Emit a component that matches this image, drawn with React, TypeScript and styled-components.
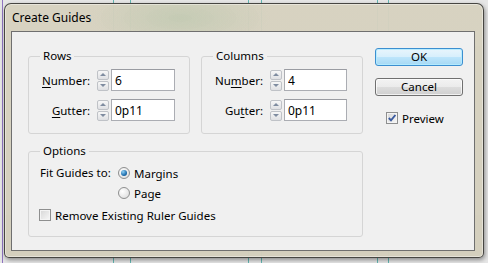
import React from 'react';
import styled, { createGlobalStyle } from 'styled-components';

const FONT = `"Noto Sans", "Open Sans", sans-serif`;

const GlobalStyle = createGlobalStyle`
  html, body {
    margin: 0;
    padding: 0;
    width: 488px;
    height: 263px;
    overflow: hidden;
  }
  body {
    font-family: ${FONT};
    font-size: 11px;
    color: #000;
    background-color: #e6e6e6;
    background-image:
      linear-gradient(90deg, transparent 0 2px, #8f74c0 2px 3px, transparent 3px 113px,
        #63b7b3 113px 114px, transparent 114px 130px, #63b7b3 130px 131px,
        transparent 131px 248px, #63b7b3 248px 249px, transparent 249px 261px,
        #63b7b3 261px 262px, transparent 262px 377px, #63b7b3 377px 378px,
        transparent 378px 388px, #63b7b3 388px 389px, transparent 389px);
  }
`;

const Page = styled.div`
  padding: 3px 0 0 4px;
`;

const Window = styled.div`
  width: 480px;
  height: 255px;
  box-sizing: border-box;
  border: 1px solid rgba(35, 35, 35, 0.8);
  border-radius: 7px 7px 5px 5px;
  background:
    radial-gradient(ellipse 90px 30px at 175px 14px, rgba(178, 196, 168, 0.5), transparent),
    linear-gradient(180deg, rgba(214, 209, 191, 0.97), rgba(211, 206, 188, 0.98));
  box-shadow: 1px 2px 4px rgba(0, 0, 0, 0.4), inset 0 0 0 1px rgba(255, 255, 255, 0.4);
  display: flex;
  flex-direction: column;
  padding: 0 8px 6px 6px;
`;

const TitleBar = styled.div`
  height: 27px;
  display: flex;
  align-items: center;
  padding-left: 1px;
  font-size: 12px;
  padding-bottom: 1px;
  box-sizing: border-box;
`;

const Client = styled.div`
  flex: 1;
  border: 1px solid #6f6f6f;
  background: #f0f0f0;
  display: flex;
  gap: 12px;
  padding: 17px 0 0 16px;
`;

const LeftCol = styled.div`
  width: 335px;
  display: flex;
  flex-direction: column;
  gap: 10px;
`;

const TopRow = styled.div`
  display: flex;
  gap: 11px;
`;

const Group = styled.fieldset<{ $w: number; $h: number; $pt: number; $pl?: number }>`
  margin: 0;
  min-width: 0;
  width: ${(p) => p.$w}px;
  height: ${(p) => p.$h}px;
  box-sizing: border-box;
  border: 1px solid #d5d5d5;
  border-radius: 3px;
  padding: ${(p) => p.$pt}px 0 0 ${(p) => p.$pl ?? 0}px;
  display: flex;
  flex-direction: column;
`;

const Legend = styled.legend<{ $ml?: number }>`
  padding: 0 3px;
  margin-left: ${(p) => p.$ml ?? 11}px;
  line-height: 14px;
  font-size: 11.5px;
`;

const FieldRow = styled.div`
  display: flex;
  align-items: center;
  height: 22px;
  & + & {
    margin-top: 8px;
  }
`;

const Label = styled.span`
  width: 61px;
  text-align: right;
  margin-right: 7px;
  font-size: 11.5px;
`;

const Spinner = styled.div`
  width: 12px;
  height: 22px;
  display: flex;
  flex-direction: column;
  margin-right: 2px;
`;

const SpinBtn = styled.div`
  flex: 1;
  margin: 0.5px 0;
  box-sizing: border-box;
  border: 1px solid #bfc2c7;
  border-radius: 2px;
  background: linear-gradient(180deg, #f7f7f7, #dfe0e3);
  display: flex;
  align-items: center;
  justify-content: center;
`;

const Arrow = styled.span<{ $down?: boolean }>`
  width: 0;
  height: 0;
  border-left: 3px solid transparent;
  border-right: 3px solid transparent;
  ${(p) => (p.$down ? 'border-top: 3px solid #7f8ca0;' : 'border-bottom: 3px solid #7f8ca0;')}
`;

const TextBox = styled.input<{ $w: number }>`
  width: ${(p) => p.$w}px;
  height: 22px;
  box-sizing: border-box;
  border: 1px solid #abadb3;
  border-top-color: #9a9ca2;
  background: #fff;
  padding: 0 0 0 3px;
  margin: 0;
  font-family: ${FONT};
  font-size: 12px;
  color: #000;
  outline: none;
`;

const OptionLine = styled.div`
  display: flex;
  align-items: center;
  height: 20px;
  font-size: 11.5px;
`;

const FitRow = styled.div`
  display: flex;
  align-items: flex-start;
  font-size: 11.5px;
`;

const FitLabel = styled.span`
  width: 79px;
  padding-left: 1px;
  box-sizing: border-box;
  line-height: 20px;
`;

const RadioList = styled.div`
  display: flex;
  flex-direction: column;
`;

const Radio = styled.span<{ $on?: boolean }>`
  width: 12px;
  height: 12px;
  box-sizing: border-box;
  border-radius: 50%;
  border: 1px solid #8e8f8f;
  background: radial-gradient(circle at 35% 35%, #ffffff, #d8d8d8);
  display: flex;
  align-items: center;
  justify-content: center;
  margin-right: 4px;
  &::after {
    content: '';
    display: ${(p) => (p.$on ? 'block' : 'none')};
    width: 6px;
    height: 6px;
    border-radius: 50%;
    background: radial-gradient(circle at 35% 30%, #8fd0f5, #1f6fae 60%, #154d80);
  }
`;

const Check = styled.span`
  width: 12px;
  height: 12px;
  box-sizing: border-box;
  border: 1px solid #8e8f8f;
  background: linear-gradient(135deg, #d6d6d6, #f8f8f8);
  box-shadow: inset 0 0 0 1px #f4f4f4;
  margin-right: 4px;
  display: flex;
  align-items: center;
  justify-content: center;
`;

const RightCol = styled.div`
  width: 88px;
  display: flex;
  flex-direction: column;
  margin-top: -1px;
`;

const Button = styled.button<{ $default?: boolean }>`
  height: 18px;
  width: 88px;
  box-sizing: border-box;
  margin: 0 0 12px 0;
  padding: 0;
  border-radius: 3px;
  font-family: ${FONT};
  font-size: 11.5px;
  line-height: 14px;
  color: #000;
  border: 1px solid ${(p) => (p.$default ? '#3c8fd0' : '#707070')};
  background: ${(p) =>
    p.$default
      ? 'linear-gradient(180deg, #e8f5fc 0%, #d7effc 50%, #bde5fb 51%, #a6d9f4 100%)'
      : 'linear-gradient(180deg, #f3f3f3 0%, #ebebeb 50%, #dddddd 51%, #cfcfcf 100%)'};
  box-shadow: inset 0 0 0 1px ${(p) => (p.$default ? 'rgba(180, 235, 255, 0.9)' : 'rgba(255, 255, 255, 0.7)')};
`;

const PreviewLine = styled.div`
  display: flex;
  align-items: center;
  height: 14px;
  margin-top: 3px;
  padding-left: 11px;
  font-size: 11.5px;
`;

const Key = styled.span`
  text-decoration: underline;
  text-underline-offset: 2px;
`;

const CheckMark = () => (
  <svg width="10" height="10" viewBox="0 0 10 10">
    <path d="M1.8 5 L4 7.4 L8.4 2" fill="none" stroke="#3b5b9f" strokeWidth="1.9" />
  </svg>
);

const Field: React.FC<{ label: React.ReactNode; value: string; w: number }> = ({ label, value, w }) => (
  <FieldRow>
    <Label>{label}</Label>
    <Spinner>
      <SpinBtn>
        <Arrow />
      </SpinBtn>
      <SpinBtn>
        <Arrow $down />
      </SpinBtn>
    </Spinner>
    <TextBox $w={w} defaultValue={value} readOnly />
  </FieldRow>
);

const App: React.FC = () => {
  return (
    <Page>
      <GlobalStyle />
      <Window>
        <TitleBar>Create Guides</TitleBar>
        <Client>
          <LeftCol>
            <TopRow>
              <Group $w={162} $h={85} $pt={6}>
                <Legend>Rows</Legend>
                <Field label={<><Key>N</Key>umber:</>} value="6" w={64} />
                <Field label={<><Key>G</Key>utter:</>} value="0p11" w={64} />
              </Group>
              <Group $w={162} $h={85} $pt={6}>
                <Legend>Columns</Legend>
                <Field label={<>Nu<Key>m</Key>ber:</>} value="4" w={63} />
                <Field label={<>Gu<Key>t</Key>ter:</>} value="0p11" w={63} />
              </Group>
            </TopRow>
            <Group $w={335} $h={93} $pt={5} $pl={10}>
              <Legend $ml={1}>Options</Legend>
              <FitRow>
                <FitLabel>Fit Guides to:</FitLabel>
                <RadioList>
                  <OptionLine>
                    <Radio $on />
                    Margins
                  </OptionLine>
                  <OptionLine>
                    <Radio />
                    Page
                  </OptionLine>
                </RadioList>
              </FitRow>
              <OptionLine style={{ marginTop: 2 }}>
                <Check />
                Remove Existing Ruler Guides
              </OptionLine>
            </Group>
          </LeftCol>
          <RightCol>
            <Button $default>OK</Button>
            <Button>Cancel</Button>
            <PreviewLine>
              <Check>
                <CheckMark />
              </Check>
              Preview
            </PreviewLine>
          </RightCol>
        </Client>
      </Window>
    </Page>
  );
};

export default App;
